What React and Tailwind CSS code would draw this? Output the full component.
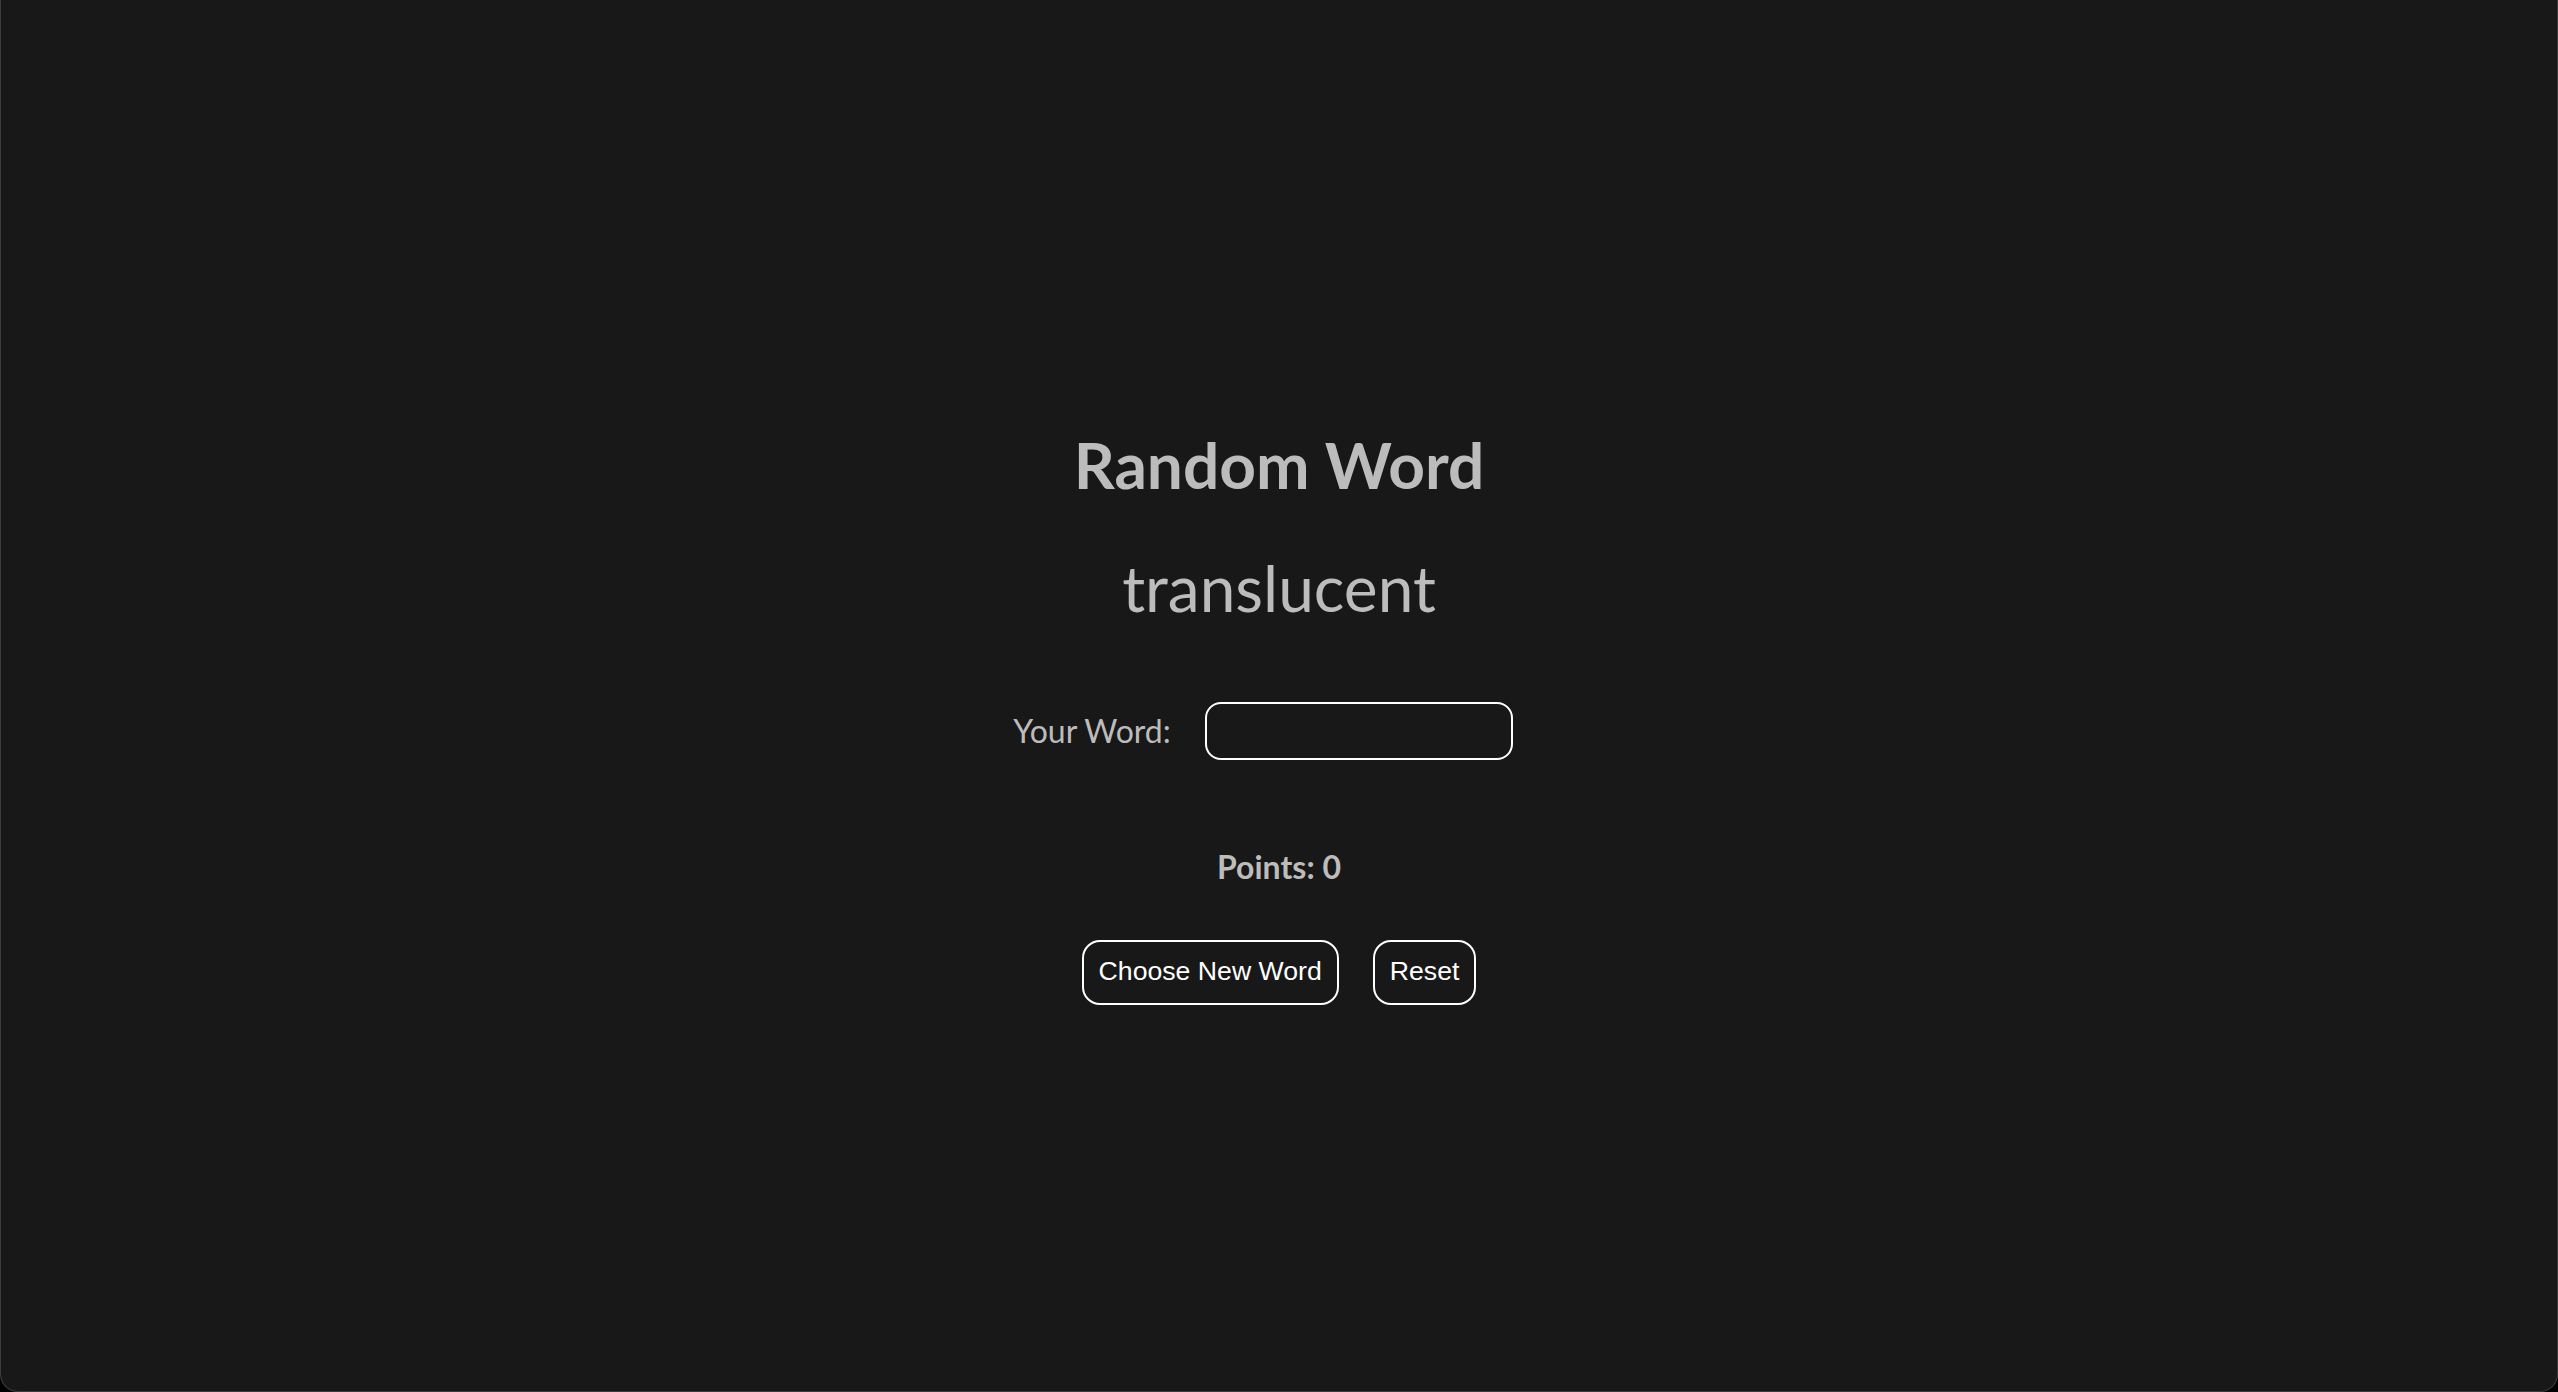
import { useState } from "react";

export default function App() {
  const [word] = useState("translucent");
  const [guess, setGuess] = useState("");
  const [points, setPoints] = useState(0);

  return (
    <div className="w-full h-screen bg-black">
      <div
        className="w-full h-full bg-[#181818] rounded-b-[18px] border-x border-b border-[#3c3c3c] flex flex-col items-center pt-[433px] text-[#bcbcbc]"
        style={{ fontFamily: "Lato, 'Noto Sans', sans-serif" }}
      >
        <h1 className="text-[64px] leading-none font-bold">Random Word</h1>
        <h2 className="mt-[59px] text-[64px] leading-none font-normal">{word}</h2>

        {/* Input row */}
        <div className="mt-[82px] flex items-center gap-[34px] -ml-[32px]">
          <label htmlFor="guess" className="text-[32px] leading-none">
            Your Word:
          </label>
          <input
            id="guess"
            value={guess}
            onChange={(e) => setGuess(e.target.value)}
            className="w-[308px] h-[58px] rounded-[16px] border-2 border-white bg-transparent px-4 text-[26px] text-white outline-none"
          />
        </div>

        <p className="mt-[91px] text-[32px] leading-none font-bold">Points: {points}</p>

        {/* Buttons */}
        <div className="mt-[57px] flex gap-[34px]">
          <button
            onClick={() => setGuess("")}
            className="h-[65px] px-[15px] pb-[3px] rounded-[18px] border-2 border-white text-white text-[26.67px] bg-transparent"
            style={{ fontFamily: "'Liberation Sans', Arial, sans-serif" }}
          >
            Choose New Word
          </button>
          <button
            onClick={() => {
              setPoints(0);
              setGuess("");
            }}
            className="h-[65px] px-[15px] pb-[3px] rounded-[18px] border-2 border-white text-white text-[26.67px] bg-transparent"
            style={{ fontFamily: "'Liberation Sans', Arial, sans-serif" }}
          >
            Reset
          </button>
        </div>
      </div>
    </div>
  );
}
